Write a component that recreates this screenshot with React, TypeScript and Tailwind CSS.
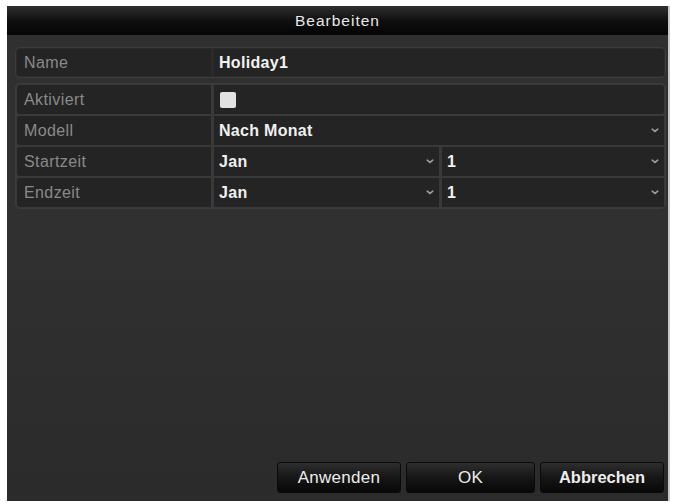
import React from 'react';

const font = { fontFamily: '"Liberation Sans", Arial, sans-serif' };

function Chevron() {
  return (
    <svg width="8" height="5" viewBox="0 0 8 5" className="shrink-0">
      <path d="M1.2 1.2 L4 3.4 L6.8 1.2" fill="none" stroke="#9c9c9c" strokeWidth="1.6" strokeLinecap="round" />
    </svg>
  );
}

function Label({ children }: { children: React.ReactNode }) {
  return (
    <div className="w-[194px] shrink-0 bg-[#242424] rounded-l-[3px] flex items-center pl-[7px] text-[16px] tracking-[0.4px] text-[#8a8a8a]">
      {children}
    </div>
  );
}

function Select({ value, className = '' }: { value: string; className?: string }) {
  return (
    <div className={`bg-[#242424] flex items-center justify-between pl-[5px] pr-[5px] text-[16px] font-bold tracking-[0.3px] text-[#f0f0f0] ${className}`}>
      <span>{value}</span>
      <Chevron />
    </div>
  );
}

export default function App() {
  return (
    <div className="w-[673px] h-[503px] bg-white pl-[7px] pt-[6px]" style={font}>
      <div className="w-[663px] h-[495px] bg-gradient-to-b from-[#303030] via-[#303030] to-[#2b2b2b] border-r-2 border-[#c8c8c8] flex flex-col">
        {/* title */}
        <div className="h-[29px] shrink-0 bg-gradient-to-b from-[#303030] via-[#101010] to-[#050505] flex items-center justify-center text-[15.5px] text-[#e8e8e8] tracking-[1px]">
          Bearbeiten
        </div>

        <div className="pl-[8px] pr-[2px] pt-[12px] flex flex-col gap-[5px]">
          {/* name */}
          <div className="h-[31px] border border-[#3c3c3c] rounded-[5px] bg-[#2b2b2b] p-[1px] flex gap-[3px]">
            <Label>Name</Label>
            <div className="flex-1 bg-[#242424] rounded-r-[3px] flex items-center pl-[5px] text-[16px] font-bold tracking-[0.3px] text-[#f2f2f2]">
              Holiday1
            </div>
          </div>

          {/* group */}
          <div className="border border-[#3c3c3c] rounded-[5px] bg-[#393939] p-[1px] flex flex-col gap-[2px]">
            <div className="h-[29px] flex gap-[3px]">
              <Label>Aktiviert</Label>
              <div className="flex-1 bg-[#242424] rounded-r-[3px] flex items-center pl-[6px]">
                <div className="w-[16px] h-[16px] bg-[#e2e2e2] rounded-[2px]" />
              </div>
            </div>
            <div className="h-[29px] flex gap-[3px]">
              <Label>Modell</Label>
              <Select value="Nach Monat" className="flex-1" />
            </div>
            <div className="h-[29px] flex gap-[3px]">
              <Label>Startzeit</Label>
              <div className="flex-1 flex gap-[3px]">
                <Select value="Jan" className="w-[225px]" />
                <Select value="1" className="flex-1" />
              </div>
            </div>
            <div className="h-[29px] flex gap-[3px]">
              <Label>Endzeit</Label>
              <div className="flex-1 flex gap-[3px]">
                <Select value="Jan" className="w-[225px]" />
                <Select value="1" className="flex-1" />
              </div>
            </div>
          </div>
        </div>

        <div className="flex-1" />

        {/* buttons */}
        <div className="flex justify-end gap-[5px] pr-[4px] pb-[8px]">
          {['Anwenden', 'OK', 'Abbrechen'].map((b, i) => (
            <button
              key={b}
              className={`h-[31px] ${i === 1 ? 'w-[129px]' : 'w-[124px]'} ${i === 2 ? 'font-bold text-[16.5px]' : 'font-normal text-[17px] tracking-[0.3px]'} rounded-[3px] border border-[#0a0a0a] bg-gradient-to-b from-[#2e2e2e] via-[#161616] to-[#080808] text-[#ececec] flex items-center justify-center`}
            >
              {b}
            </button>
          ))}
        </div>
      </div>
    </div>
  );
}
